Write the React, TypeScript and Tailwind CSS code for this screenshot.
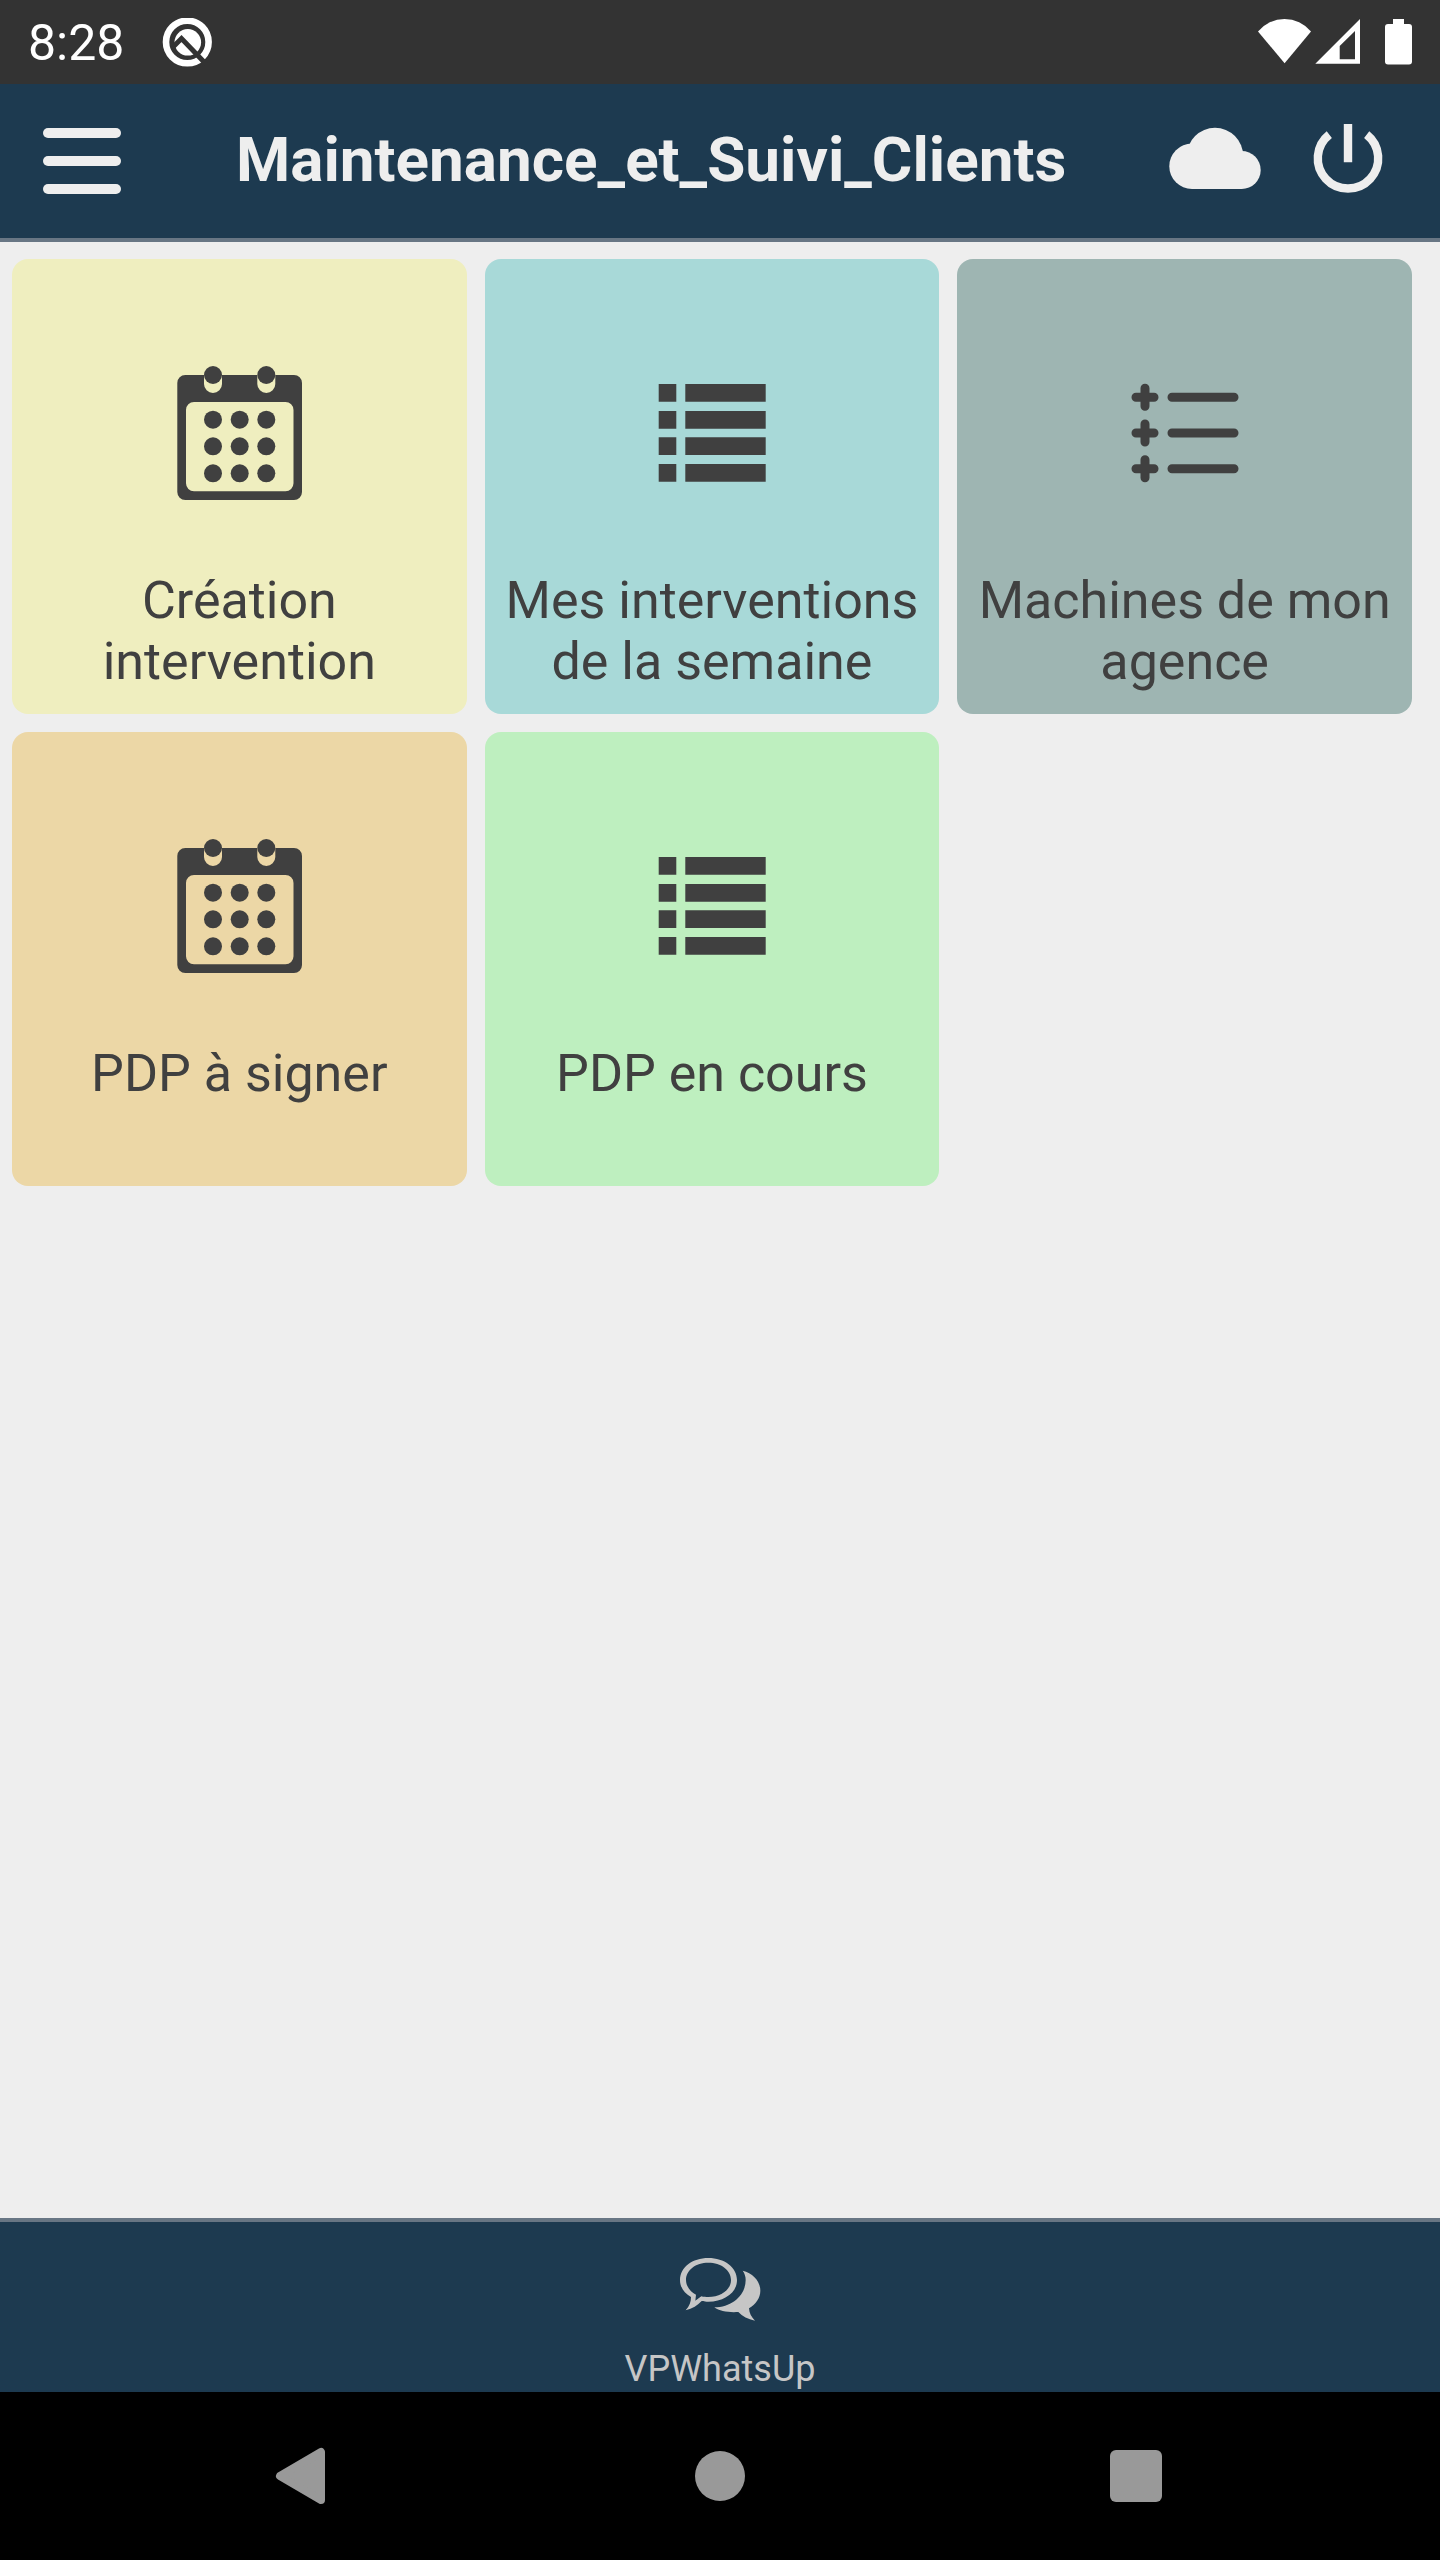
import type { ReactNode } from "react";

const DOT_COLUMNS = [53, 79.7, 106.3];
const DOT_ROWS = [70.7, 97.3, 124.3];

function CalendarIcon() {
  return (
    <svg viewBox="-1 4 160 160" className="size-40" fill="currentColor" aria-hidden="true">
      <path
        fillRule="evenodd"
        d="M25.3 26H44V35a9 9 0 0 0 18 0V26H97.3V35a9 9 0 0 0 18 0V26H134a8 8 0 0 1 8 8V143a8 8 0 0 1-8 8H25.3a8 8 0 0 1-8-8V34a8 8 0 0 1 8-8ZM34 53a8 8 0 0 0-8 8V134.3a8 8 0 0 0 8 8H125.5a8 8 0 0 0 8-8V61a8 8 0 0 0-8-8Z"
      />
      <circle cx="53" cy="26" r="9" />
      <circle cx="106.3" cy="26" r="9" />
      {DOT_ROWS.map((y) => DOT_COLUMNS.map((x) => <circle key={`${x}-${y}`} cx={x} cy={y} r="9" />))}
    </svg>
  );
}

function ListIcon() {
  return (
    <svg viewBox="-8 -6 160 160" className="size-40" fill="currentColor" aria-hidden="true">
      {[25, 52, 78.3, 105].map((y) => (
        <path key={y} d={`M18.7 ${y}h17.6v17.8h-17.6zM45.3 ${y}h80.4v17.8h-80.4z`} />
      ))}
    </svg>
  );
}

function PlusListIcon() {
  return (
    <svg
      viewBox="-5.5 -6 160 160"
      className="size-40"
      fill="none"
      stroke="currentColor"
      strokeWidth="9"
      strokeLinecap="round"
      aria-hidden="true"
    >
      {[38.3, 74, 109.7].map((y) => (
        <path key={y} d={`M25.5 ${y}h18M34.5 ${y - 9}v18M61.5 ${y}h62`} />
      ))}
    </svg>
  );
}

type Tile = { label: string; color: string; icon: ReactNode };

const tiles: Tile[] = [
  { label: "Création intervention", color: "bg-[#efeebf]", icon: <CalendarIcon /> },
  { label: "Mes interventions de la semaine", color: "bg-[#a8d9d8]", icon: <ListIcon /> },
  { label: "Machines de mon agence", color: "bg-[#9eb5b2]", icon: <PlusListIcon /> },
  { label: "PDP à signer", color: "bg-[#ecd7a6]", icon: <CalendarIcon /> },
  { label: "PDP en cours", color: "bg-[#beefbf]", icon: <ListIcon /> },
];

function StatusBar() {
  return (
    <div className="flex h-[84px] items-center bg-[#333333] px-7 pt-[2px] text-white">
      <span className="text-[50px] leading-[60px]">8:28</span>
      <svg viewBox="162 18 50 50" className="ml-[38px] size-[50px]" aria-hidden="true">
        <circle cx="187.3" cy="42" r="21.3" fill="none" stroke="currentColor" strokeWidth="6.6" />
        <circle cx="187.8" cy="42.3" r="13.3" fill="currentColor" />
        <path d="M172 48 L181.5 38.5 L206 64" fill="none" stroke="#333333" strokeWidth="5" />
      </svg>
      <div className="ml-auto flex items-center">
        <svg viewBox="138 18 53 50" className="h-[50px] w-[53px]" fill="currentColor" aria-hidden="true">
          <path d="M164.6 63.3 138 31.5A34.3 34.3 0 0 1 191 31.5Z" />
        </svg>
        <svg viewBox="195 18 45 50" className="ml-1 h-[50px] w-[45px]" fill="currentColor" aria-hidden="true">
          <path
            fillRule="evenodd"
            d="M195.3 63.7 240 19V63.7ZM219.7 46V59.3H235V31Z"
          />
        </svg>
        <svg viewBox="265 18 27 50" className="ml-[25px] h-[50px] w-[27px]" fill="currentColor" aria-hidden="true">
          <rect x="273" y="19" width="11" height="8" />
          <rect x="265" y="24" width="27" height="40.5" rx="3" />
        </svg>
      </div>
    </div>
  );
}

function Header() {
  return (
    <header className="flex h-[158px] items-center border-b-4 border-[#687684] bg-[#1d3a50] pl-[43px] pr-14 text-[#eeeeee]">
      <button type="button" aria-label="Menu" className="flex flex-col gap-[18px]">
        <span className="h-[10px] w-[78px] rounded-full bg-[#eeeeee]" />
        <span className="h-[10px] w-[78px] rounded-full bg-[#eeeeee]" />
        <span className="h-[10px] w-[78px] rounded-full bg-[#eeeeee]" />
      </button>
      <h1 className="ml-[115px] flex-1 pb-[2px] text-[62px] leading-[72px] font-bold whitespace-nowrap">
        Maintenance_et_Suivi_Clients
      </h1>
      <button type="button" aria-label="Synchroniser">
        <svg viewBox="48 123 96 76" className="h-[76px] w-24" fill="currentColor" aria-hidden="true">
          <circle cx="72" cy="166.3" r="22.7" />
          <circle cx="95" cy="156" r="28.2" />
          <circle cx="121.7" cy="170" r="19" />
          <rect x="72" y="152" width="49.7" height="37" />
        </svg>
      </button>
      <button type="button" aria-label="Déconnexion" className="ml-12">
        <svg
          viewBox="191.3 123 72 76"
          className="h-[76px] w-[72px]"
          fill="none"
          stroke="currentColor"
          strokeWidth="8.4"
          aria-hidden="true"
        >
          <path d="M227.3 124V162.3M208.6 134.6a30.2 30.2 0 1 0 37.4 0" />
        </svg>
      </button>
    </header>
  );
}

function Footer() {
  return (
    <footer className="flex h-[174px] justify-center border-t-4 border-[#687684] bg-[#1d3a50] text-[#c6c6c6]">
      <button type="button" className="flex flex-col items-center pt-[35px]">
        <svg viewBox="240 171 246 195" className="h-[65px] w-[82px]" fill="currentColor" aria-hidden="true">
          <path
            fillRule="evenodd"
            d="M328 174C376 174 414 202 414 240C414 278 376 305 328 305C321 305 316 305 308 303C296 316 280 326 260 331C272 318 276 305 276 291C256 280 243 262 243 240C243 202 280 174 328 174ZM328 188C290 188 261 210 261 240C261 258 273 275 291 284L289 302L307 289C314 291 321 291 328 291C366 291 396 269 396 240C396 210 366 188 328 188Z"
          />
          <path d="M431 212C462 220 484 243 484 272C484 294 470 313 450 325C451 340 457 351 468 362C447 358 430 349 418 336C390 338 362 334 346 322C400 322 440 285 440 240C440 230 437 220 431 212Z" />
        </svg>
        <span className="mt-[25px] text-[36px] leading-[44px]">VPWhatsUp</span>
      </button>
    </footer>
  );
}

function NavigationBar() {
  return (
    <nav className="grid h-[168px] grid-cols-3 items-center justify-items-center bg-black px-24 text-[#999999]">
      <button type="button" aria-label="Retour">
        <svg viewBox="274 2446 60 60" className="size-[60px]" fill="currentColor" aria-hidden="true">
          <path
            d="M280 2476 321 2452V2500Z"
            stroke="currentColor"
            strokeWidth="8"
            strokeLinejoin="round"
          />
        </svg>
      </button>
      <button type="button" aria-label="Accueil" className="size-[50px] rounded-full bg-[#999999]" />
      <button type="button" aria-label="Applications récentes" className="size-[52px] rounded-md bg-[#999999]" />
    </nav>
  );
}

export default function App() {
  return (
    <div className="flex min-h-screen flex-col bg-[#eeeeee] font-[Roboto,sans-serif]">
      <StatusBar />
      <Header />
      <main className="grid flex-1 grid-cols-3 content-start gap-[18px] pt-[17px] pr-7 pl-3">
        {tiles.map((tile) => (
          <button
            key={tile.label}
            type="button"
            className={`flex aspect-square flex-col items-center rounded-2xl px-4 pt-[94px] text-[#404040] ${tile.color}`}
          >
            {tile.icon}
            <span className="mt-[57px] text-center text-[52px] leading-[61px]">{tile.label}</span>
          </button>
        ))}
      </main>
      <Footer />
      <NavigationBar />
    </div>
  );
}
